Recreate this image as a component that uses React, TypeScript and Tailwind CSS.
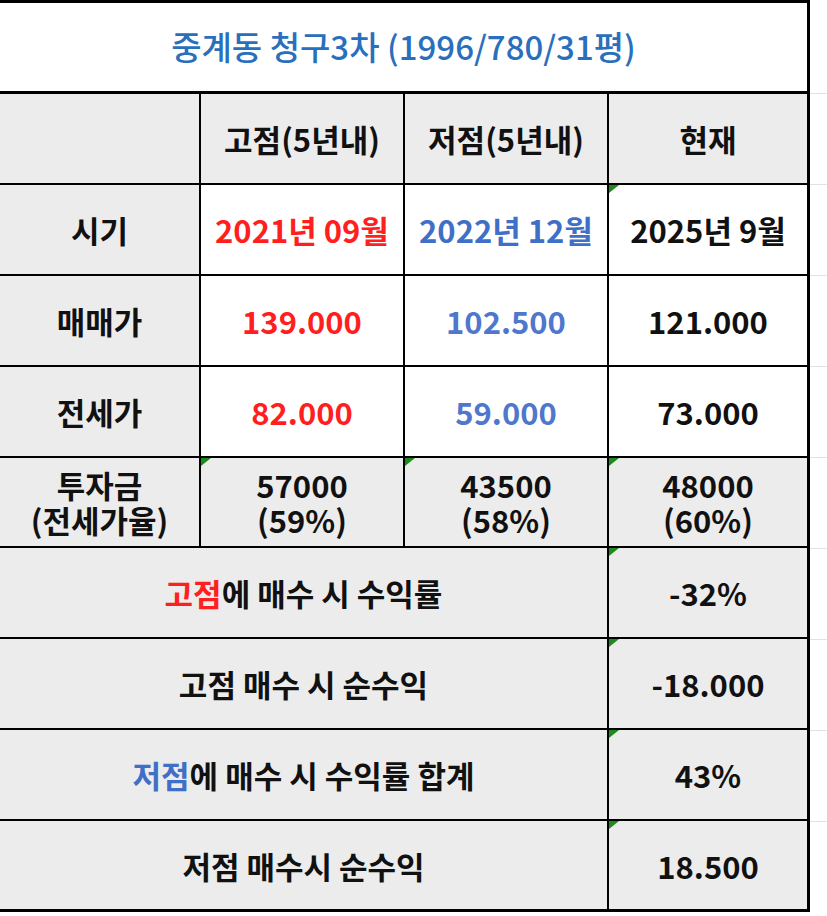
import React from "react";

const RED = "text-[#ff1f1f]";
const BLUE = "text-[#3f6fc6]";

type Cell = {
  text: React.ReactNode;
  gray?: boolean;
  span?: boolean;
  color?: string;
  mark?: boolean;
};

// 녹색 삼각형 (엑셀 오류 표시)
const Mark = () => (
  <span className="absolute left-0 top-0 h-0 w-0 border-t-[8px] border-r-[10px] border-t-[#1e8a1e] border-r-transparent" />
);

const rows: Cell[][] = [
  [
    { text: "", gray: true },
    { text: "고점(5년내)", gray: true },
    { text: "저점(5년내)", gray: true },
    { text: "현재", gray: true },
  ],
  [
    { text: "시기", gray: true },
    { text: "2021년 09월", color: RED },
    { text: "2022년 12월", color: BLUE },
    { text: "2025년 9월", mark: true },
  ],
  [
    { text: "매매가", gray: true },
    { text: "139.000", color: RED },
    { text: "102.500", color: "text-[#4f77cc]" },
    { text: "121.000" },
  ],
  [
    { text: "전세가", gray: true },
    { text: "82.000", color: RED },
    { text: "59.000", color: "text-[#4f77cc]" },
    { text: "73.000" },
  ],
  [
    {
      text: (
        <>
          투자금
          <br />
          (전세가율)
        </>
      ),
      gray: true,
    },
    {
      text: (
        <>
          57000
          <br />
          (59%)
        </>
      ),
      gray: true,
      mark: true,
    },
    {
      text: (
        <>
          43500
          <br />
          (58%)
        </>
      ),
      gray: true,
      mark: true,
    },
    {
      text: (
        <>
          48000
          <br />
          (60%)
        </>
      ),
      gray: true,
      mark: true,
    },
  ],
  [
    {
      text: (
        <>
          <span className={RED}>고점</span>에 매수 시 수익률
        </>
      ),
      gray: true,
      span: true,
    },
    { text: "-32%", gray: true, mark: true },
  ],
  [
    { text: "고점 매수 시 순수익", gray: true, span: true },
    { text: "-18.000", gray: true, mark: true },
  ],
  [
    {
      text: (
        <>
          <span className={BLUE}>저점</span>에 매수 시 수익률 합계
        </>
      ),
      gray: true,
      span: true,
    },
    { text: "43%", gray: true, mark: true },
  ],
  [
    { text: "저점 매수시 순수익", gray: true, span: true },
    { text: "18.500", gray: true, mark: true },
  ],
];

export default function App() {
  return (
    <div
      className="flex min-h-[916px] w-[827px] bg-white text-[#111]"
      style={{ fontFamily: '"Noto Sans CJK KR", "Noto Sans", sans-serif' }}
    >
      <div className="w-[810px] bg-black pt-[3px] pr-[3px] pb-[3px] self-start">
        <div className="flex h-[88px] items-center justify-center bg-white text-[33px] font-medium text-[#2a6fbd]">
          중계동 청구3차 (1996/780/31평)
        </div>
        <div className="mt-[3px] grid grid-cols-[199px_202px_202px_198px] grid-rows-[89px_89px_89px_89px_88px_89px_89px_89px_88px] gap-[2px]">
          {rows.map((row, i) =>
            row.map((c, j) => (
              <div
                key={i + "-" + j}
                className={
                  "relative flex items-center justify-center text-center text-[31px] font-bold leading-[35px] " +
                  (c.gray ? "bg-[#ececec] " : "bg-white ") +
                  (c.span ? "col-span-3 " : "") +
                  (c.color ?? "")
                }
              >
                {c.mark && <Mark />}
                <span>{c.text}</span>
              </div>
            ))
          )}
        </div>
      </div>
      <div className="flex flex-1 flex-col pt-[3px]">
        <div className="h-[91px] border-b border-[#e2e2e2]" />
        {[0, 1, 2, 3, 4, 5, 6, 7].map((k) => (
          <div key={k} className="h-[91px] border-b border-[#e2e2e2]" />
        ))}
      </div>
    </div>
  );
}
